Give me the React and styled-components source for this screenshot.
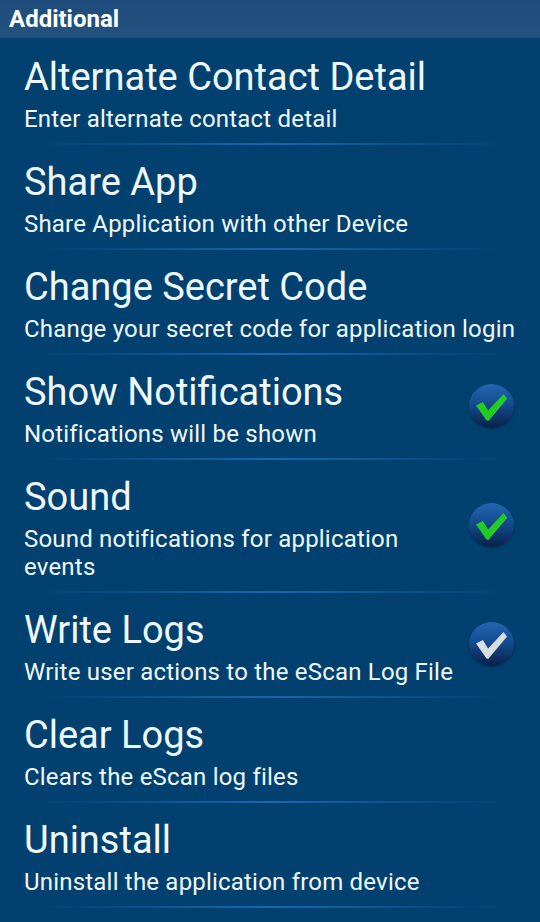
import styled, { createGlobalStyle } from "styled-components";

const items = [
  { title: "Alternate Contact Detail", sub: "Enter alternate contact detail" },
  { title: "Share App", sub: "Share Application with other Device" },
  { title: "Change Secret Code", sub: "Change your secret code for application login" },
  { title: "Show Notifications", sub: "Notifications will be shown", check: "#22cc22" },
  { title: "Sound", sub: "Sound notifications for application events", check: "#22cc22" },
  { title: "Write Logs", sub: "Write user actions to the eScan Log File", check: "#d8dde2" },
  { title: "Clear Logs", sub: "Clears the eScan log files" },
  { title: "Uninstall", sub: "Uninstall the application from device" },
];

function CheckBadge({ color }) {
  return (
    <Badge>
      <CheckIcon width="31" height="27" viewBox="0 0 90 78">
        <path d="M0 33 L20 23 L35 48 L80 0 L90 13 L35 78 L30 76 Z" fill={color} />
        <path d="M90 13 L35 78" stroke="#9be89b" strokeOpacity="0.45" strokeWidth="2" fill="none" />
      </CheckIcon>
    </Badge>
  );
}

export default function App() {
  return (
    <>
      <GlobalStyle />
      <Screen>
        <Header>Additional</Header>
        <List>
          {items.map((item) => (
            <Row key={item.title}>
              <RowText>
                <Title>{item.title}</Title>
                <Sub>{item.sub}</Sub>
              </RowText>
              {item.check && <CheckBadge color={item.check} />}
            </Row>
          ))}
        </List>
      </Screen>
    </>
  );
}

// ***************** Component Styles
const GlobalStyle = createGlobalStyle`
  html, body {
    margin: 0;
    padding: 0;
    background: #02416f;
  }
`;

const Screen = styled.main`
  width: 540px;
  height: 922px;
  overflow: hidden;
  background: #02416f;
  font-family: Roboto, "Liberation Sans", sans-serif;
  color: #eef8fb;
`;

const Header = styled.header`
  height: 38px;
  box-sizing: border-box;
  padding-left: 9px;
  background: linear-gradient(#1d4c7c, #24527f);
  border-bottom: 1px solid #1c4a79;
  color: #fff;
  font-size: 24px;
  font-weight: 700;
  line-height: 39px;
`;

const List = styled.div`
  padding-top: 1px;
`;

const Row = styled.section`
  position: relative;
  display: flex;
  align-items: flex-start;
  box-sizing: border-box;
  padding: 16px 20px 11px 24px;

  &::after {
    content: "";
    position: absolute;
    left: 45px;
    right: 40px;
    bottom: -1px;
    height: 2px;
    background: linear-gradient(90deg, rgba(30, 110, 190, 0), #1b66b2 50%, rgba(30, 110, 190, 0));
  }
`;

const RowText = styled.div`
  flex: 1;
  min-width: 0;
`;

const Title = styled.div`
  font-size: 38px;
  line-height: 44px;
`;

const Sub = styled.div`
  margin-top: 6px;
  font-size: 24px;
  line-height: 28px;
  letter-spacing: 0.2px;
`;

const Badge = styled.div`
  flex: none;
  align-self: center;
  display: flex;
  align-items: center;
  justify-content: center;
  width: 45px;
  height: 44px;
  margin: 0 6px 6px 11px;
  border-radius: 50%;
  background: linear-gradient(#2266b0, #144c90 45%, #0a2450 95%);
  box-shadow: 0 1px 2px rgba(0, 20, 50, 0.5);
`;

const CheckIcon = styled.svg`
  margin-top: 3px;
`;
